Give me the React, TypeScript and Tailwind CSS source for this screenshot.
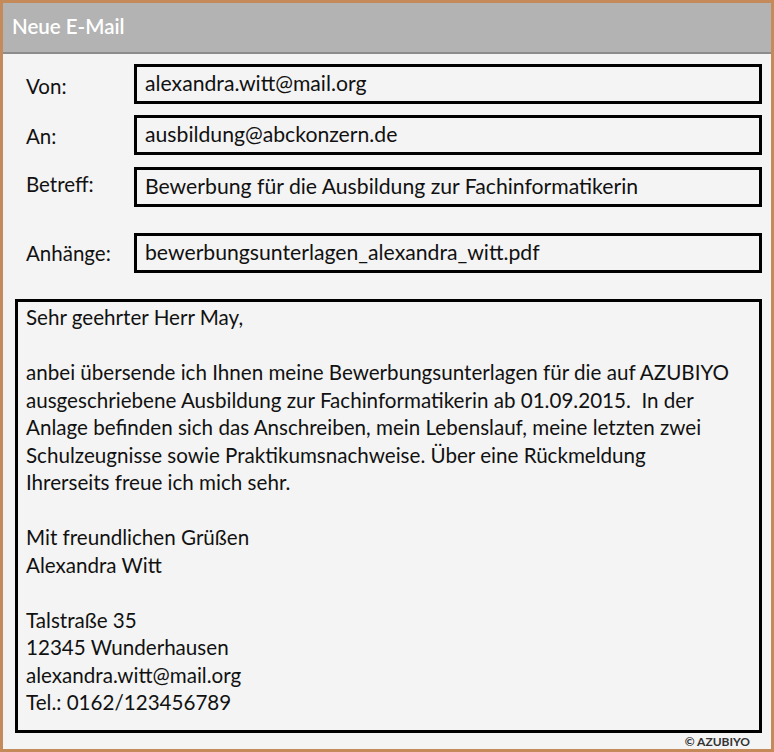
const FONT = "font-['Lato','Open_Sans',sans-serif]";

const FIELDS = [
  { label: 'Von:', value: 'alexandra.witt@mail.org', mt: 'mt-[10px]', shift: 'mt-[5px]' },
  { label: 'An:', value: 'ausbildung@abckonzern.de', mt: 'mt-[11px]', shift: 'mt-[3px]' },
  { label: 'Betreff:', value: 'Bewerbung für die Ausbildung zur Fachinformatikerin', mt: 'mt-[12px]', shift: '-mt-[6px]' },
  { label: 'Anhänge:', value: 'bewerbungsunterlagen_alexandra_witt.pdf', mt: 'mt-[26px]', shift: 'mt-0' },
];

export default function App() {
  return (
    <div
      className={`w-[774px] h-[752px] border-[3px] border-[#c58a5a] bg-[#f4f4f4] flex flex-col text-[#111] ${FONT}`}
    >
      {/* Header */}
      <div className="h-[51px] shrink-0 bg-[#b3b3b3] border-b-[2px] border-[#8c8c8c] flex items-center px-[9px]">
        <span className="text-white text-[20.5px] font-semibold leading-none -mt-[3px]">Neue E-Mail</span>
      </div>

      {/* Fields */}
      <div className="flex flex-col pr-[9px]">
        {FIELDS.map((f) => (
          <div key={f.label} className={`flex items-center ${f.mt}`}>
            <span className={`w-[131px] pl-[23px] text-[20.5px] ${f.shift}`}>{f.label}</span>
            <div className="flex-1 h-[40px] border-[3px] border-black flex items-center px-[8px] text-[21.2px] leading-none">
              {f.value}
            </div>
          </div>
        ))}
      </div>

      {/* Message body */}
      <div className="mt-[26px] ml-[12px] mr-[9px] h-[434px] border-[3px] border-black px-[8px] pt-[2px] text-[20.6px] leading-[27.5px]">
        <p>Sehr geehrter Herr May,</p>
        <p className="mt-[27.5px]">
          anbei übersende ich Ihnen meine Bewerbungsunterlagen für die auf AZUBIYO
          <br />
          ausgeschriebene Ausbildung zur Fachinformatikerin ab 01.09.2015.&nbsp; In der
          <br />
          Anlage befinden sich das Anschreiben, mein Lebenslauf, meine letzten zwei
          <br />
          Schulzeugnisse sowie Praktikumsnachweise. Über eine Rückmeldung
          <br />
          Ihrerseits freue ich mich sehr.
        </p>
        <p className="mt-[27.5px]">
          Mit freundlichen Grüßen
          <br />
          Alexandra Witt
        </p>
        <p className="mt-[27.5px]">
          Talstraße 35
          <br />
          12345 Wunderhausen
          <br />
          alexandra.witt@mail.org
          <br />
          Tel.: 0162/123456789
        </p>
      </div>

      <div className="flex justify-end pr-[21px] mt-[3px]">
        <span className="text-[12px] font-bold text-[#333] leading-none">© AZUBIYO</span>
      </div>
    </div>
  );
}
